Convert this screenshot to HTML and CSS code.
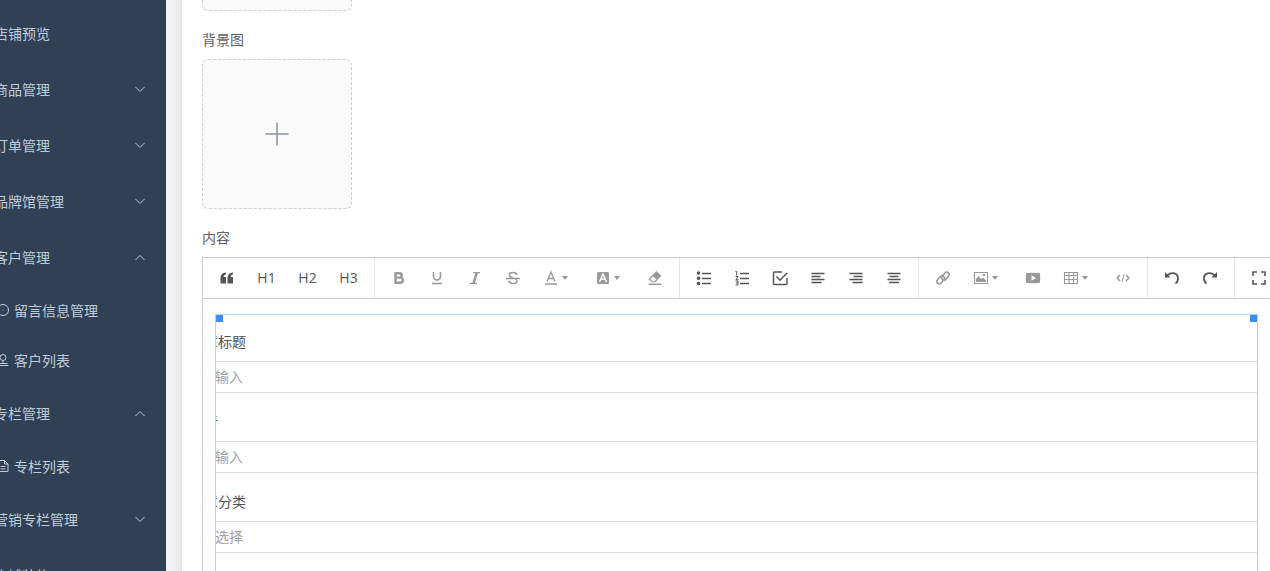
FILE: index.html
```html
<!DOCTYPE html>
<html lang="zh-CN">

<head>
    <meta charset="UTF-8">
    <meta name="viewport" content="width=device-width, initial-scale=1.0">
    <title>店铺管理</title>
    <link rel="stylesheet" href="styles.css">
</head>

<body>
    <nav class="sidebar">
        <ul class="menu">
            <li><a href="#" class="menu-item">店铺预览</a></li>
            <li><a href="#" class="menu-item">商品管理<svg class="arrow" viewBox="0 0 12 12"><path d="M1.5 4 6 8.5 10.5 4"/></svg></a></li>
            <li><a href="#" class="menu-item">订单管理<svg class="arrow" viewBox="0 0 12 12"><path d="M1.5 4 6 8.5 10.5 4"/></svg></a></li>
            <li><a href="#" class="menu-item">品牌馆管理<svg class="arrow" viewBox="0 0 12 12"><path d="M1.5 4 6 8.5 10.5 4"/></svg></a></li>
            <li>
                <a href="#" class="menu-item">客户管理<svg class="arrow" viewBox="0 0 12 12"><path d="M1.5 9 6 4.5 10.5 9"/></svg></a>
                <ul class="submenu">
                    <li><a href="#" class="submenu-item"><svg class="menu-icon" viewBox="0 0 14 14"><circle cx="7" cy="7" r="5.5"/><path d="M6.5 7h1"/></svg>留言信息管理</a></li>
                    <li><a href="#" class="submenu-item"><svg class="menu-icon" viewBox="0 0 14 14"><circle cx="7" cy="4.5" r="3"/><path d="M7 7.5v3M2.5 10.5h9M1.5 12.5h11"/></svg>客户列表</a></li>
                </ul>
            </li>
            <li>
                <a href="#" class="menu-item">专栏管理<svg class="arrow" viewBox="0 0 12 12"><path d="M1.5 9 6 4.5 10.5 9"/></svg></a>
                <ul class="submenu">
                    <li><a href="#" class="submenu-item"><svg class="menu-icon" viewBox="0 0 14 14"><path d="M2.5 1.5h6l3.500 3.500v7.500H2.500zM8.500 1.500V5H12M4.500 7.500h5M4.500 10h5"/></svg>专栏列表</a></li>
                </ul>
            </li>
            <li><a href="#" class="menu-item">营销专栏管理<svg class="arrow" viewBox="0 0 12 12"><path d="M1.5 4 6 8.5 10.5 4"/></svg></a></li>
            <li><a href="#" class="menu-item">店铺装修</a></li>
        </ul>
    </nav>

    <main class="main">
        <div class="card">
            <button type="button" class="upload" aria-label="上传图片"></button>
            <div class="label">背景图</div>
            <button type="button" class="upload" aria-label="上传背景图">
                <svg class="plus" viewBox="0 0 28 28"><path d="M14 2.500v23M2.500 14h23"/></svg>
            </button>
            <div class="label">内容</div>

            <div class="editor">
                <div class="toolbar">
                    <div class="group">
                        <button type="button" class="tool" aria-label="引用"><svg viewBox="0 0 18 18"><path class="fill" d="M8 3.500v1.700C6.500 5.600 5.800 6.700 5.700 8H8v6.500H2.500V9C2.500 6 4.500 3.800 8 3.500zM15 3.500v1.700C13.500 5.600 12.800 6.700 12.700 8H15v6.500H9.500V9C9.500 6 11.500 3.800 15 3.500z"/></svg></button>
                        <button type="button" class="tool heading">H1</button>
                        <button type="button" class="tool heading">H2</button>
                        <button type="button" class="tool heading">H3</button>
                    </div>
                    <div class="group light">
                        <button type="button" class="tool" aria-label="加粗"><svg viewBox="0 0 18 18"><path class="bold" d="M5.500 4.200h4a2.200 2.200 0 0 1 0 4.400h-4zM5.500 8.600h4.700a2.600 2.600 0 0 1 0 5.200H5.500z"/></svg></button>
                        <button type="button" class="tool" aria-label="下划线"><svg viewBox="0 0 18 18"><path d="M5.500 3v4.500a3.500 3.500 0 0 0 7 0V3M4 14.500h10" stroke-width="1.600"/></svg></button>
                        <button type="button" class="tool" aria-label="斜体"><svg viewBox="0 0 18 18"><path d="M7 3.600h7M4 14.400h7" stroke-width="1.200"/><path class="bold" d="m10.800 3.600-3.300 10.800"/></svg></button>
                        <button type="button" class="tool" aria-label="删除线"><svg viewBox="0 0 18 18"><path d="M12.800 6c-.2-1.600-1.600-2.600-3.700-2.600S5.300 4.400 5.300 6.100c0 1.500 1.100 2.300 3.700 2.900 2.800.6 4 1.300 4 2.900s-1.500 2.700-3.900 2.700c-2.400 0-4-1-4.200-2.900M2 9.500h14"/></svg></button>
                        <button type="button" class="tool dropdown" aria-label="文字颜色"><svg viewBox="0 0 18 18"><path d="m5 12.500 4-9.500 4 9.500M6.500 9.500h5M3 15h12" stroke-width="1.300"/></svg><span class="caret"></span></button>
                        <button type="button" class="tool dropdown" aria-label="背景颜色"><svg viewBox="0 0 18 18"><rect class="fill" x="3" y="3" width="12" height="12" rx="1.500"/><path class="white" d="m5.500 13 3.500-8 3.500 8M7 10.300h4"/></svg><span class="caret"></span></button>
                        <button type="button" class="tool" aria-label="清除格式"><svg viewBox="0 0 18 18"><path class="fill" fill-rule="evenodd" d="m10.300 2 5 4.700-5.800 6.500H5.700L2.500 10.300zM7 7.500l-2.700 2.700 2 2h2.300L10.500 10.300z"/><path d="M2.500 15.300h13"/></svg></button>
                    </div>
                    <div class="group">
                        <button type="button" class="tool" aria-label="无序列表"><svg viewBox="0 0 18 18"><path d="M7 4.500h9M7 9.500h9M7 14.500h9"/><g class="fill"><circle cx="3.500" cy="4" r="1.800"/><circle cx="3.500" cy="9.300" r="1.800"/><circle cx="3.500" cy="14.500" r="1.800"/></g></svg></button>
                        <button type="button" class="tool" aria-label="有序列表"><svg viewBox="0 0 18 18"><path d="M7 4.500h9M7 9.500h9M7 14.500h9"/><path d="M2.500 2.500h1.200v4M2.500 7.500H5L3 10.700h2.500M2.500 12H5v4H2.500M3 14h2" stroke-width="1"/></svg></button>
                        <button type="button" class="tool" aria-label="待办列表"><svg viewBox="0 0 18 18"><path d="M11 3H3.500q-1 0-1 1v10.500q0 1 1 1H15q1 0 1-1V9M5.500 7.500l3.500 3.700L16 4"/></svg></button>
                        <button type="button" class="tool" aria-label="左对齐"><svg viewBox="0 0 18 18"><path d="M2.500 4.500h13M2.500 7.500h9M2.500 10.500h13M2.500 13.500h10" stroke-width="1.300"/></svg></button>
                        <button type="button" class="tool" aria-label="右对齐"><svg viewBox="0 0 18 18"><path d="M2.500 4.500h13M6.500 7.500h9M2.500 10.500h13M5.500 13.500h10" stroke-width="1.300"/></svg></button>
                        <button type="button" class="tool" aria-label="居中"><svg viewBox="0 0 18 18"><path d="M2.500 4.500h13M4.500 7.500h9M2.500 10.500h13M4 13.500h10" stroke-width="1.300"/></svg></button>
                    </div>
                    <div class="group light">
                        <button type="button" class="tool" aria-label="链接"><svg viewBox="0 0 18 18"><g transform="rotate(-50 9 9)"><rect x="1.500" y="6" width="9" height="4.800" rx="2.400"/><rect x="7.500" y="7.200" width="9" height="4.800" rx="2.400"/></g></svg></button>
                        <button type="button" class="tool dropdown" aria-label="图片"><svg viewBox="0 0 18 18"><path d="M2.500 3.500h13v11h-13z" stroke-width="1.200"/><path class="fill" d="M4 13V10l2.500-3 2.500 3 2-1.500 3 3V13z"/><circle class="fill" cx="12" cy="6" r="1.200"/></svg><span class="caret"></span></button>
                        <button type="button" class="tool" aria-label="视频"><svg viewBox="0 0 18 18"><path class="fill" fill-rule="evenodd" d="M3 4q6-.7 12 0 1 .1 1 1 .5 4 0 8 0 1-1 1-6 .7-12 0-1 0-1-1-.5-4 0-8 0-.9 1-1zm4.500 2.200v5.600L12 9z"/></svg></button>
                        <button type="button" class="tool dropdown" aria-label="表格"><svg viewBox="0 0 18 18"><path d="M2.500 3.500h13v11h-13zM2.500 6.500h13M2.500 10.500h13M7 4v10.500M11.500 4v10.500" stroke-width="1.100"/></svg><span class="caret"></span></button>
                        <button type="button" class="tool" aria-label="代码"><svg viewBox="0 0 18 18"><path d="M6 6 3.200 9 6 12M12 6l2.800 3-2.800 3" stroke-width="1.600"/><path d="M10 5 8 13" stroke-width="1"/></svg></button>
                    </div>
                    <div class="group">
                        <button type="button" class="tool" aria-label="撤销"><svg viewBox="0 0 18 18"><path d="M4 6.500C9 2.500 15 4 15 9.500c0 2.500-1 4-2.500 5" stroke-width="1.800"/><path class="fill" d="M2 3v5.500h5.500z"/></svg></button>
                        <button type="button" class="tool" aria-label="重做"><svg viewBox="0 0 18 18"><path d="M14 6.500C9 2.500 3 4 3 9.500c0 2.500 1 4 2.500 5" stroke-width="1.800"/><path class="fill" d="M16 3v5.500h-5.500z"/></svg></button>
                    </div>
                    <div class="group">
                        <button type="button" class="tool" aria-label="全屏"><svg viewBox="0 0 18 18"><path d="M3 7V3h4M11 3h4v4M15 11v4h-4M7 15H3v-4" stroke-width="1.600"/></svg></button>
                    </div>
                </div>

                <div class="frame">
                    <span class="handle handle-left"></span>
                    <span class="handle handle-right"></span>
                    <form class="form">
                        <label class="form-label" for="title">文章标题</label>
                        <input class="field" type="text" id="title" placeholder="请输入">
                        <label class="form-label" for="author">作者</label>
                        <input class="field" type="text" id="author" placeholder="请输入">
                        <label class="form-label" for="category">文章分类</label>
                        <select class="field" id="category">
                            <option>请选择</option>
                        </select>
                    </form>
                </div>
            </div>
        </div>
    </main>
</body>

</html>
```
FILE: styles.css
```css
* {
    box-sizing: border-box;
}

body {
    margin: 0;
    display: flex;
    height: 100vh;
    overflow: hidden;
    background: #f1f3f4;
    color: #606266;
    font-family: "Open Sans", "Noto Sans CJK SC", sans-serif;
    font-size: 14px;
}

button,
input,
select {
    font: inherit;
    color: inherit;
}

ul {
    margin: 0;
    padding: 0;
    list-style: none;
}

svg {
    fill: none;
    stroke: currentColor;
}

/* sidebar */
.sidebar {
    flex: none;
    width: 166px;
    overflow: hidden;
    background: #304156;
}

.menu {
    padding-top: 6px;
    margin-left: -6px;
}

.menu-item,
.submenu-item {
    display: flex;
    align-items: center;
    padding-bottom: 2px;
    color: #bfcbd9;
    text-decoration: none;
    white-space: nowrap;
}

.menu-item {
    justify-content: space-between;
    height: 56px;
    padding-right: 20px;
}

.submenu-item {
    gap: 4px;
    height: 50px;
    padding-left: 2px;
}

.arrow {
    width: 12px;
    height: 12px;
}

.menu-icon {
    width: 14px;
    height: 14px;
}

/* content */
.main {
    flex: 1;
    min-width: 0;
    padding-left: 16px;
    overflow: hidden;
}

.card {
    min-height: 1000px;
    margin-top: -159px;
    padding: 20px 0 0 20px;
    background: #fff;
    box-shadow: 0 2px 12px rgba(0, 0, 0, 0.1);
}

.upload {
    display: flex;
    align-items: center;
    justify-content: center;
    width: 150px;
    height: 150px;
    padding: 0;
    background: #fafafa;
    border: 1px dashed #ccced4;
    border-radius: 6px;
    color: #8c939d;
}

.plus {
    width: 28px;
    height: 28px;
    stroke-width: 1.5;
}

.label {
    margin-top: 10px;
    line-height: 38px;
}

/* editor */
.editor {
    height: 600px;
    border: 1px solid #ccc;
    border-right: none;
}

.toolbar {
    display: flex;
    height: 41px;
    overflow: hidden;
    border-bottom: 1px solid #ccc;
    color: #555;
}

.group {
    display: flex;
    flex: none;
    padding: 0 5px;
    border-right: 1px solid #e5e5e5;
}

.light {
    color: #999;
}

.tool {
    display: flex;
    align-items: center;
    justify-content: center;
    width: 38px;
    padding: 0;
    background: none;
    border: none;
    cursor: pointer;
}

.tool svg {
    width: 18px;
    height: 18px;
    stroke-width: 1.5;
}

.heading {
    width: 41px;
    padding-bottom: 2px;
}

.dropdown {
    justify-content: flex-start;
    gap: 2px;
    width: 52px;
    padding-left: 10px;
}

.tool .fill {
    fill: currentColor;
    stroke: none;
}

.tool .bold {
    stroke-width: 2.4;
}

.tool .white {
    stroke: #fff;
}

.caret {
    border: 3px solid transparent;
    border-top: 4px solid currentColor;
    border-bottom: none;
}

/* selected block inside the editor */
.frame {
    position: relative;
    height: 500px;
    margin: 15px 12px 0;
    padding-top: 8px;
    overflow: hidden;
    border: 1px solid #b4d3fb;
}

.handle {
    position: absolute;
    top: 0;
    width: 7px;
    height: 7px;
    background: #3f8ef7;
}

.handle-left {
    left: 0;
}

.handle-right {
    right: 0;
}

.form {
    margin: 0 -26px;
}

.form-label {
    display: block;
    line-height: 38px;
    color: #505256;
}

.field {
    display: block;
    width: 100%;
    height: 32px;
    margin-bottom: 10px;
    padding: 0 10px 2px;
    background: #fff;
    border: 1px solid #dcdfe6;
    appearance: none;
    color: #a0a2a8;
}

.field::placeholder {
    color: #a0a2a8;
    opacity: 1;
}
```
